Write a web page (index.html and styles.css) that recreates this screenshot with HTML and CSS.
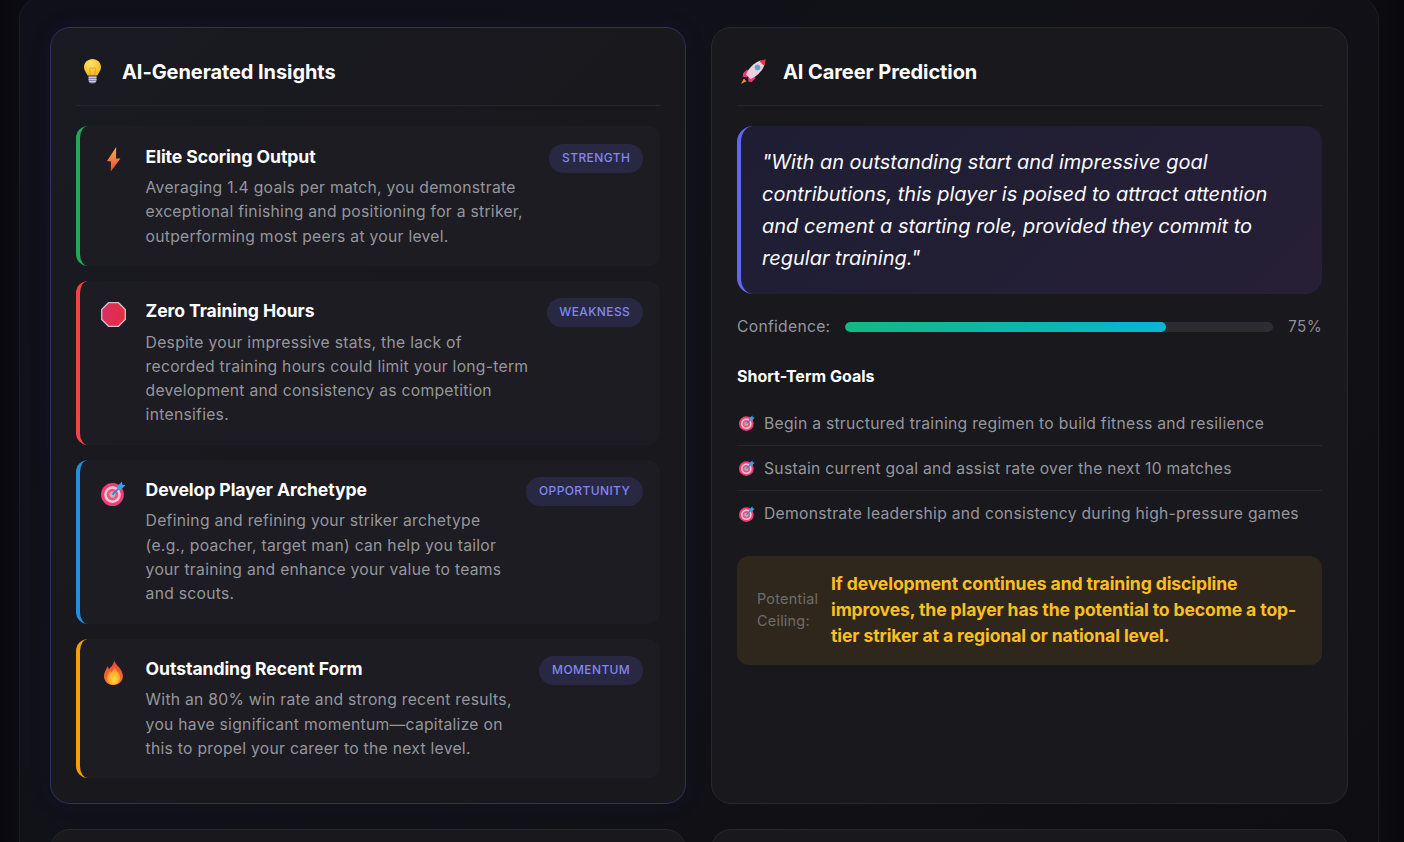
FILE: index.html
```html
<!DOCTYPE html>
<html lang="en">
<head>
<meta charset="utf-8">
<title>AI Insights</title>
<link rel="stylesheet" href="styles.css">
</head>
<body>
<svg class="defs" aria-hidden="true">
  <defs>
    <linearGradient id="g-bolt" x1="0" y1="0" x2="0" y2="1"><stop offset="0" stop-color="#ffb23e"/><stop offset="1" stop-color="#e9483c"/></linearGradient>
    <linearGradient id="g-stop" x1="0" y1="0" x2="1" y2="0"><stop offset="0" stop-color="#d92f68"/><stop offset="1" stop-color="#e82c3c"/></linearGradient>
    <linearGradient id="g-flame" x1="0" y1="0" x2="0" y2="1"><stop offset="0" stop-color="#e8453a"/><stop offset="1" stop-color="#f47a2a"/></linearGradient>
    <radialGradient id="g-flame-in" cx=".55" cy=".72" r=".7"><stop offset="0" stop-color="#ffdc3c"/><stop offset=".65" stop-color="#ffa52c"/><stop offset="1" stop-color="#f4762c"/></radialGradient>
    <radialGradient id="g-bulb" cx=".42" cy=".3" r=".7"><stop offset="0" stop-color="#ffe36a"/><stop offset="1" stop-color="#fbb81e"/></radialGradient>
    <symbol id="i-target" viewBox="0 0 24 24">
      <circle cx="11" cy="13" r="11" fill="#ec3f78"/>
      <circle cx="11" cy="13" r="8" fill="#f6c6d4"/>
      <circle cx="11" cy="13" r="5.6" fill="#e9577f"/>
      <circle cx="11" cy="13" r="3" fill="#b7b2bb"/>
      <path d="M11 13 19 5" stroke="#2d7fd6" stroke-width="1.6"/>
      <path d="M15.500 5 20 .6l.6 2.900 3 .6L19 8.500l-3.500-.5z" fill="#3aa0ec"/>
    </symbol>
  </defs>
</svg>
<div class="page">
  <div class="grid">
    <section class="card card-accent">
      <header class="card-head">
        <span class="head-icon">
          <svg class="ic-bulb" viewBox="0 0 17 25"><path d="M8.5 0C3.8 0 0 3.6 0 8.2c0 3.4 2.4 5.2 3.6 8.4h9.8c1.2-3.2 3.6-5 3.6-8.4C17 3.6 13.200 0 8.500 0z" fill="url(#g-bulb)"/><path d="M6 16V11.500c-1.800-2.600 1.500-3.800 2.500-1.200 1-2.600 4.300-1.400 2.500 1.200V16" fill="none" stroke="#e79a1c" stroke-width=".9"/><path d="M4.500 16.800h8v5.200c0 1-1.600 2.600-4 2.600s-4-1.600-4-2.600z" fill="#8f86a8"/><path d="M4.500 18.500h8M4.500 20.500h8M5 22.500h7" stroke="#d9d3e6" stroke-width=".9"/></svg>
        </span>
        <h2 class="card-title">AI-Generated Insights</h2>
      </header>
      <div class="insights">
        <article class="insight insight-green">
          <span class="insight-icon"><svg class="ic-bolt" viewBox="0 0 14 25"><path d="M9.200 0 0 14l4 .5-.2 10L13.400 11.500 9 11.500z" fill="url(#g-bolt)"/></svg></span>
          <div class="insight-body">
            <h3 class="insight-title">Elite Scoring Output</h3>
            <p class="insight-text">Averaging 1.4 goals per match, you demonstrate exceptional finishing and positioning for a striker, outperforming most peers at your level.</p>
          </div>
          <span class="badge">STRENGTH</span>
        </article>
        <article class="insight insight-red">
          <span class="insight-icon"><svg class="ic-big" viewBox="0 0 25 25"><path d="M7.500.7h10l6.800 6.800v10l-6.800 6.800h-10L.7 17.500v-10z" fill="url(#g-stop)" stroke="#c9c5cf" stroke-width="1.300"/></svg></span>
          <div class="insight-body">
            <h3 class="insight-title">Zero Training Hours</h3>
            <p class="insight-text">Despite your impressive stats, the lack of recorded training hours could limit your long-term development and consistency as competition intensifies.</p>
          </div>
          <span class="badge">WEAKNESS</span>
        </article>
        <article class="insight insight-blue">
          <span class="insight-icon"><svg class="ic-big"><use href="#i-target"/></svg></span>
          <div class="insight-body">
            <h3 class="insight-title">Develop Player Archetype</h3>
            <p class="insight-text">Defining and refining your striker archetype (e.g., poacher, target man) can help you tailor your training and enhance your value to teams and scouts.</p>
          </div>
          <span class="badge">OPPORTUNITY</span>
        </article>
        <article class="insight insight-orange">
          <span class="insight-icon"><svg class="ic-flame" viewBox="0 0 19 25"><path d="M10 0c.8 3.500 4.800 6.300 7 10 2.600 4.400 2.400 9-.2 11.800C14.800 24 12.200 25 9.500 25 4.300 25 0 21.500 0 16.200 0 12 2.400 9.400 3.600 6.300c.7 1 1.200 1.900 1.300 2.900C7.300 6.800 10.300 4 10 0z" fill="url(#g-flame)"/><path d="M10.500 6.500c.6 3 4 5.200 5.200 8.700 1.300 4-1.500 9.300-6.200 9.300-4.400 0-7.200-3.800-6.400-7.800.5-2.700 2.300-4.400 3.100-6.200.5.700.8 1.300.9 2.200 1.500-1.700 3.300-3.500 3.400-6.200z" fill="url(#g-flame-in)"/></svg></span>
          <div class="insight-body">
            <h3 class="insight-title">Outstanding Recent Form</h3>
            <p class="insight-text">With an 80% win rate and strong recent results, you have significant momentum—capitalize on this to propel your career to the next level.</p>
          </div>
          <span class="badge">MOMENTUM</span>
        </article>
      </div>
    </section>
    <section class="card">
      <header class="card-head">
        <span class="head-icon">
          <svg class="ic-big" viewBox="0 0 25 25"><path d="M2.800 19.500 0 25l5.500-2.800z" fill="#f5842a"/><path d="M6 10.500 2 14.500l-.3 3.300 4.300.5 3-4zM14.500 19 10.800 23l-3.300-.3-.4-4 4-3z" fill="#f0347f"/><path d="M5 15.500C7.500 9.500 13 3.500 19.500 1.500l4 4c-2 6.500-8 12-14 14.500z" fill="#e7d3dc"/><path d="M18.500 1.800 24.700.3l-1.200 6.200c-1.900-.7-4.200-2.800-5-4.700z" fill="#f0304a"/><circle cx="16.500" cy="8.500" r="2.500" fill="#4aa8e8" stroke="#8d8a9a" stroke-width=".8"/></svg>
        </span>
        <h2 class="card-title">AI Career Prediction</h2>
      </header>
      <blockquote class="quote">"With an outstanding start and impressive goal contributions, this player is poised to attract attention and cement a starting role, provided they commit to regular training."</blockquote>
      <div class="confidence">
        <span class="confidence-label">Confidence:</span>
        <div class="bar"><div class="bar-fill" style="width:75%"></div></div>
        <span class="confidence-value">75%</span>
      </div>
      <h3 class="goals-title">Short-Term Goals</h3>
      <ul class="goals">
        <li class="goal"><svg class="ic-small"><use href="#i-target"/></svg><span>Begin a structured training regimen to build fitness and resilience</span></li>
        <li class="goal"><svg class="ic-small"><use href="#i-target"/></svg><span>Sustain current goal and assist rate over the next 10 matches</span></li>
        <li class="goal"><svg class="ic-small"><use href="#i-target"/></svg><span>Demonstrate leadership and consistency during high-pressure games</span></li>
      </ul>
      <div class="ceiling">
        <span class="ceiling-label">Potential Ceiling:</span>
        <span class="ceiling-text">If development continues and training discipline improves, the player has the potential to become a top-tier striker at a regional or national level.</span>
      </div>
    </section>
    <section class="card card-next"></section>
    <section class="card card-next"></section>
  </div>
</div>
</body>
</html>
```
FILE: styles.css
```css
* { box-sizing: border-box; }
html, body { margin: 0; height: 842px; overflow: hidden; }
body {
  background: linear-gradient(90deg, #08080d 0, #0b0b12 19px, #0b0b10 1379px, #09090d 100%);
  font-family: Inter, "Liberation Sans", sans-serif;
  color: #fff;
}
.defs { position: absolute; width: 0; height: 0; }
.page {
  width: 1360px;
  margin: -4px 0 0 19px;
  padding: 30px;
  height: 1000px;
  background: linear-gradient(135deg, #10101a 0%, #111117 50%, #0e0e12 100%);
  border: 1px solid #1c1c22;
  border-radius: 24px;
}
.grid { display: grid; grid-template-columns: 636px 637px; gap: 25px; }
.card {
  background: #18181d;
  border: 1px solid #27272d;
  border-radius: 20px;
  padding: 25px;
}
.card-accent {
  background: linear-gradient(135deg, #1a1a22 0%, #18181d 45%);
  border-color: #322f5e;
  box-shadow: 0 0 24px rgba(70, 70, 200, 0.08);
}
.card-next { min-height: 120px; }
.card-head {
  display: flex;
  align-items: center;
  gap: 14px;
  height: 53px;
  padding-bottom: 15px;
  margin-bottom: 20px;
  border-bottom: 1px solid #26262c;
}
.head-icon { width: 32px; height: 38px; display: flex; align-items: center; justify-content: center; }
.card-title { margin: 0; font-size: 20px; line-height: 38px; font-weight: 700; letter-spacing: -0.08px; color: #fff; }
.ic-bulb { width: 17px; height: 25px; }
.ic-bolt { width: 14px; height: 25px; }
.ic-big { width: 25px; height: 25px; }
.ic-flame { width: 19px; height: 25px; }
.ic-small { width: 16px; height: 16px; flex: none; }

.insights { display: flex; flex-direction: column; gap: 15px; }
.insight {
  display: flex;
  gap: 16px;
  align-items: flex-start;
  padding: 17.6px 17px 16.8px 17.6px;
  background: #1c1c22;
  border-left: 4px solid #22c55e;
  border-radius: 12px;
}
.insight-green { border-left-color: #22a85a; }
.insight-red { border-left-color: #ef4444; }
.insight-blue { border-left-color: #1f8fe0; }
.insight-orange { border-left-color: #f59e0b; }
.insight-icon { flex: none; width: 32px; height: 32px; display: flex; align-items: center; justify-content: center; }
.insight-body { flex: 1; min-width: 0; }
.insight-title { margin: 0 0 6.3px; font-size: 17.6px; line-height: 26px; font-weight: 700; letter-spacing: -0.08px; color: #fff; }
.insight-text { margin: 0; font-size: 15.68px; line-height: 24.32px; letter-spacing: 0.28px; color: #96969d; }
.badge {
  flex: none;
  padding: 5px 12.8px 7px;
  border-radius: 20px;
  background: #282843;
  color: #8286f0;
  font-size: 12px;
  line-height: 17px;
  font-weight: 500;
  letter-spacing: 0.38px;
}

.quote {
  margin: 0;
  padding: 20px 20px 20px 21px;
  border-left: 4px solid #6366f1;
  border-radius: 16px;
  background: linear-gradient(135deg, #1e1e33, #261f36);
  font-size: 20px;
  line-height: 32px;
  font-style: oblique;
  color: #fafafc;
}
.confidence { display: flex; align-items: center; gap: 15px; margin-top: 21px; }
.confidence-label { font-size: 15.68px; line-height: 24px; letter-spacing: 0.28px; color: #96969d; }
.bar { flex: 1; height: 10px; border-radius: 5px; background: #2c2c32; overflow: hidden; }
.bar-fill { height: 100%; border-radius: 5px; background: linear-gradient(90deg, #10b981, #06b6d4); }
.confidence-value { font-size: 15.2px; line-height: 24px; letter-spacing: 0.4px; color: #8e8e96; }
.goals-title { margin: 25px 0 0; font-size: 16px; line-height: 24px; font-weight: 700; color: #fff; }
.goals { list-style: none; margin: 13px 0 0; padding: 0; }
.goal {
  display: flex;
  align-items: center;
  gap: 9px;
  height: 45px;
  padding-left: 2px;
  font-size: 15.68px;
  letter-spacing: 0.28px;
  color: #96969d;
  border-bottom: 1px solid #26262c;
}
.goal:last-child { border-bottom: 0; }
.ceiling {
  display: flex;
  align-items: center;
  gap: 12px;
  margin-top: 20px;
  padding: 15px 20px 16px;
  border-radius: 12px;
  background: #2f271c;
}
.ceiling-label { flex: none; width: 62px; font-size: 14.4px; line-height: 22px; letter-spacing: 0.25px; color: #6e6c6a; }
.ceiling-text { font-size: 17.6px; line-height: 26px; font-weight: 700; letter-spacing: -0.12px; color: #fbbf24; }
```
